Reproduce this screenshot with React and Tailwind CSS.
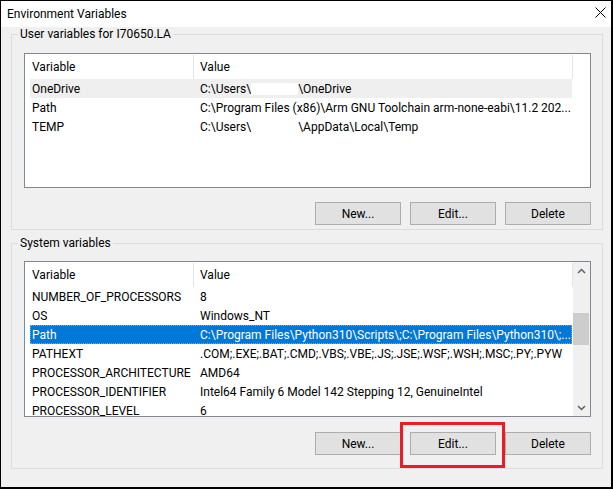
import React from "react";

function Header() {
  return (
    <div className="flex h-[25px] shrink-0 items-stretch">
      <div className="flex w-[168px] items-center pl-[7px]">Variable</div>
      <div className="mt-[1px] w-px bg-[#e5e5e5]" />
      <div className="flex w-[378px] items-center pl-[6px]">Value</div>
      <div className="mt-[1px] w-px bg-[#e5e5e5]" />
    </div>
  );
}

function Row({ name, value, variant }) {
  const cls =
    variant === "sel"
      ? "bg-[#0078d7] text-white outline outline-1 outline-dotted outline-[#ff8728] -outline-offset-1"
      : variant === "hover"
      ? "bg-[#efefef]"
      : "";
  return (
    <div
      className={`ml-[5px] flex h-[19px] w-[542px] shrink-0 items-center overflow-hidden whitespace-nowrap pl-[2px] ${cls}`}
    >
      <div className="w-[168px] shrink-0">{name}</div>
      <div className="shrink-0">{value}</div>
    </div>
  );
}

function Redacted({ before, after, hover }) {
  return (
    <span className="flex items-center">
      <span>{before}</span>
      <span className={`inline-block h-[12px] w-[47px] ${hover ? "bg-white" : ""}`} />
      <span>{after}</span>
    </span>
  );
}

function Btn({ children }) {
  return (
    <div className="flex h-[23px] w-[86px] items-center justify-center border border-[#adadad] bg-[#e1e1e1]">
      {children}
    </div>
  );
}

function Chevron({ down }) {
  return (
    <svg width="9" height="6" viewBox="0 0 9 6">
      <path
        d={down ? "M1 1 L4.5 4.5 L8 1" : "M1 5 L4.5 1.5 L8 5"}
        fill="none"
        stroke="#606060"
        strokeWidth="1.5"
      />
    </svg>
  );
}

function Group({ label, children, className }) {
  return (
    <fieldset
      className={`ml-[10px] w-[592px] border border-[#dcdcdc] pl-[12px] ${className}`}
    >
      <legend className="ml-[-6px] px-[2px] leading-[14px]">{label}</legend>
      {children}
    </fieldset>
  );
}

function Buttons({ highlight }) {
  return (
    <div className="flex w-[567px] justify-end gap-[9px]">
      <Btn>New...</Btn>
      <div className="relative">
        <Btn>Edit...</Btn>
        {highlight && (
          <div className="absolute left-[-10px] top-[-10px] h-[46px] w-[105px] border-[3px] border-[#ed1c24]" />
        )}
      </div>
      <Btn>Delete</Btn>
    </div>
  );
}

export default function App() {
  return (
    <div className="h-[489px] w-[613px] bg-white text-[12px] text-black [font-family:Roboto,'Liberation_Sans',sans-serif]">
      <div className="flex h-[489px] w-[613px] flex-col border-b-2 border-l border-r-2 border-t border-black bg-[#f0f0f0]">
        <div className="flex h-[26px] shrink-0 items-center justify-between bg-white pl-[6px] pr-[5px]">
          <span className="mt-[-1px]">Environment Variables</span>
          <svg width="11" height="11" viewBox="0 0 11 11" className="mt-[-3px]">
            <path d="M0.5 0.5 L10.5 10.5 M10.5 0.5 L0.5 10.5" stroke="#000" strokeWidth="1" />
          </svg>
        </div>

        <Group label="User variables for I70650.LA" className="pb-[4px]">
          <div className="mt-[12px] flex h-[135px] w-[567px] overflow-hidden border border-[#828790] bg-white">
            <div className="flex w-[548px] flex-col">
              <Header />
              <Row
                variant="hover"
                name="OneDrive"
                value={<Redacted before="C:\Users\" after="\OneDrive" hover />}
              />
              <Row
                name="Path"
                value="C:\Program Files (x86)\Arm GNU Toolchain arm-none-eabi\11.2 202..."
              />
              <Row
                name="TEMP"
                value={<Redacted before="C:\Users\" after="\AppData\Local\Temp" />}
              />
            </div>
          </div>
          <div className="mt-[14px]">
            <Buttons />
          </div>
        </Group>

        <Group label="System variables" className="mt-[6px] pb-[13px]">
          <div className="mt-[11px] flex h-[156px] w-[567px] overflow-hidden border border-[#828790] bg-white">
            <div className="flex w-[548px] flex-col overflow-hidden">
              <Header />
              <Row name="NUMBER_OF_PROCESSORS" value="8" />
              <Row name="OS" value="Windows_NT" />
              <Row
                variant="sel"
                name="Path"
                value="C:\Program Files\Python310\Scripts\;C:\Program Files\Python310\;..."
              />
              <Row
                name="PATHEXT"
                value=".COM;.EXE;.BAT;.CMD;.VBS;.VBE;.JS;.JSE;.WSF;.WSH;.MSC;.PY;.PYW"
              />
              <Row name="PROCESSOR_ARCHITECTURE" value="AMD64" />
              <Row
                name="PROCESSOR_IDENTIFIER"
                value="Intel64 Family 6 Model 142 Stepping 12, GenuineIntel"
              />
              <Row name="PROCESSOR_LEVEL" value="6" />
            </div>
            <div className="flex w-[17px] flex-col bg-[#f0f0f0]">
              <div className="flex h-[17px] items-center justify-center">
                <Chevron />
              </div>
              <div className="flex-1">
                <div className="mt-[34px] h-[32px] w-[16px] bg-[#cdcdcd]" />
              </div>
              <div className="flex h-[17px] items-center justify-center">
                <Chevron down />
              </div>
            </div>
          </div>
          <div className="mt-[15px]">
            <Buttons highlight />
          </div>
        </Group>
      </div>
    </div>
  );
}
